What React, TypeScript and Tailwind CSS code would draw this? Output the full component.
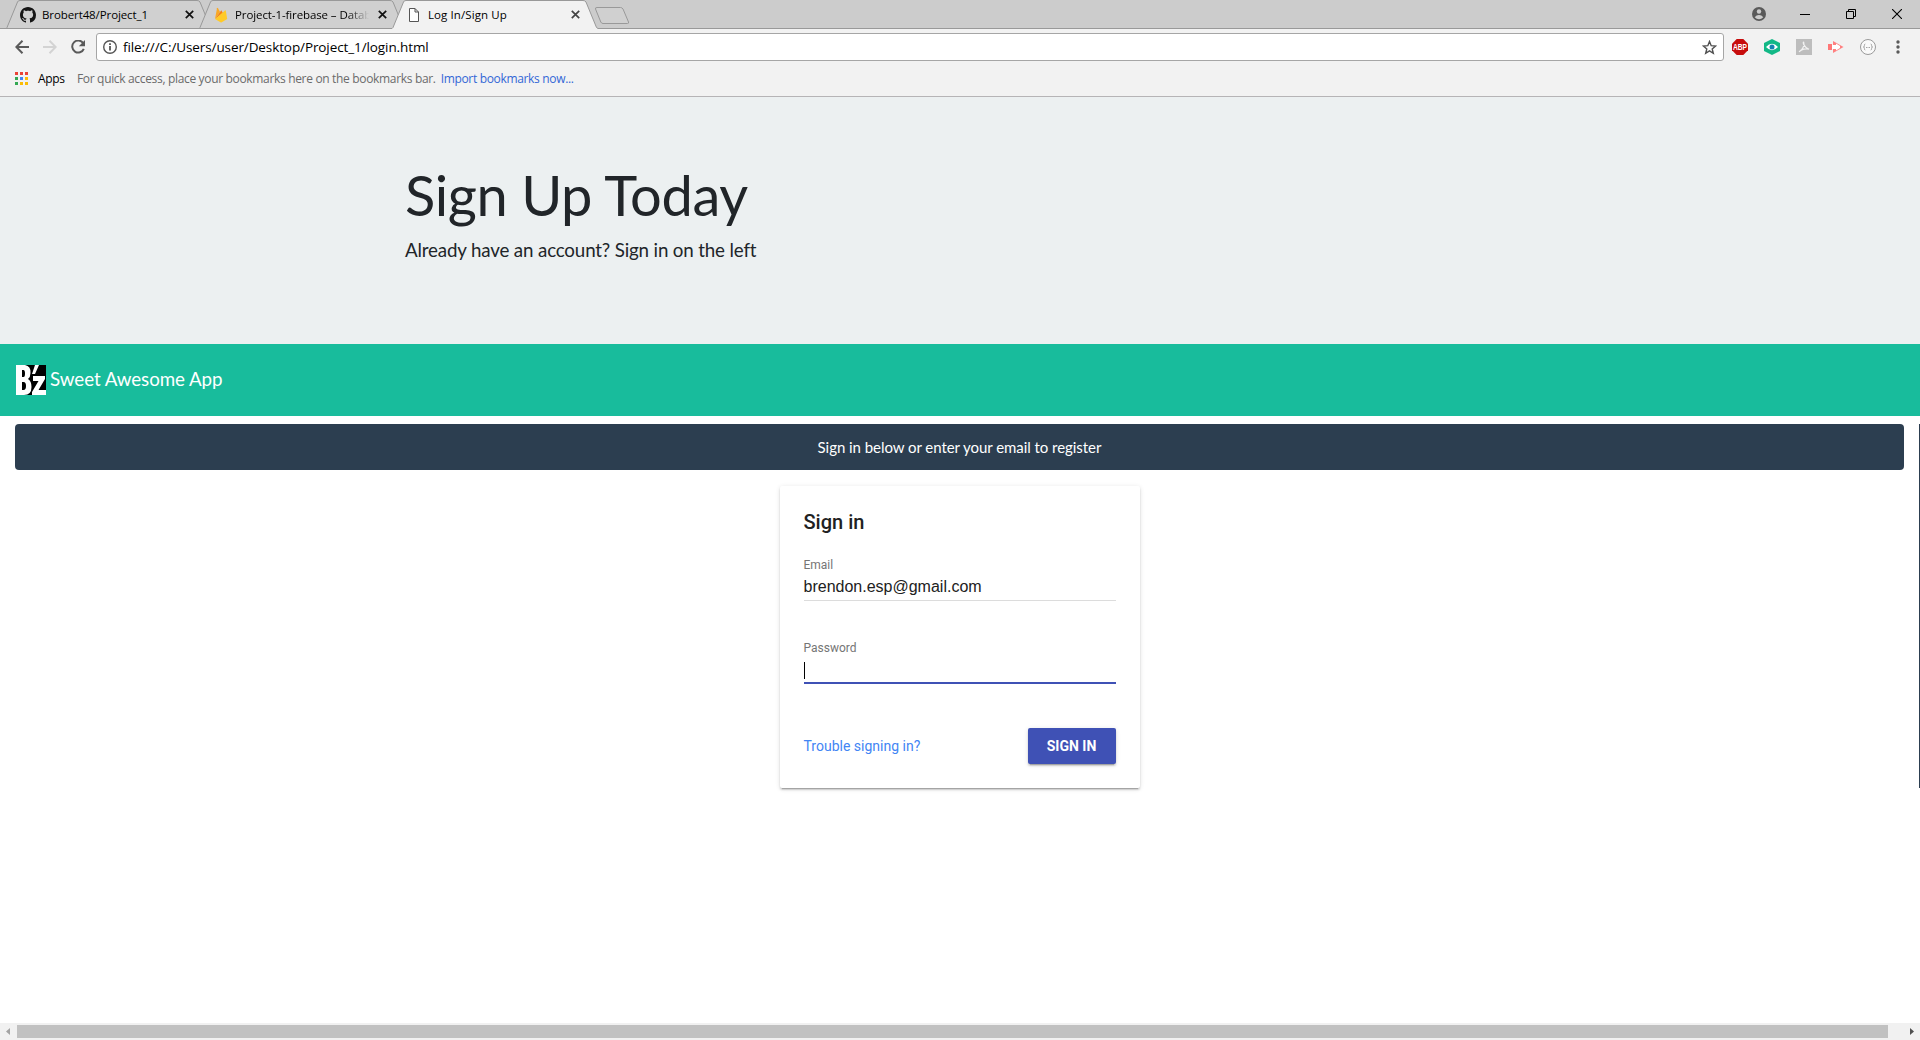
import type { ReactNode } from 'react';

const UI = "font-['Open_Sans',sans-serif]";

function Tab({ icon, title, active = false }: { icon: ReactNode; title: ReactNode; active?: boolean }) {
  return (
    <div className={active ? 'relative z-20 -ml-[13px] flex h-[29px] w-[206px] items-center pl-[14px]' : 'relative -ml-[13px] flex h-[29px] w-[206px] items-center pl-[14px]'}>
      <svg className="absolute inset-0" width="206" height="29" viewBox="0 0 206 29" fill="none">
        <path d="M0 28.5 L1 27.5 L11.5 2 Q12 .5 14 .5 H191 Q193 .5 194 2 L204.500 27.500 L206 28.500 V29 H0Z" fill={active ? '#f2f2f2' : '#d0d0d0'} />
        <path d="M0 28.500 L1 27.500 L11.500 2 Q12 .5 14 .5 H191 Q193 .5 194 2 L204.500 27.500 L206 28.500" stroke="#999" />
        {!active && <path d="M0 28.5H206" stroke="#999" />}
      </svg>
      <div className="relative flex w-4 justify-center">{icon}</div>
      <div className="relative ml-1.5 flex-1">{title}</div>
      <svg className="relative mr-[18px]" width="9" height="9" viewBox="0 0 9 9" stroke={active ? '#444' : '#111'} strokeWidth="1.7">
        <path d="M.8 .8 8.200 8.200M8.200 .8 .8 8.200" />
      </svg>
    </div>
  );
}

function Titlebar() {
  return (
    <div className={`${UI} flex h-[29px] border-b border-[#999] bg-[#cccccc]`}>
      <div className="flex h-[29px] pl-[19px]">
        <Tab
          icon={
            <svg width="16" height="16" viewBox="0 0 16 16" fill="#161616">
              <path d="M8 0C3.580 0 0 3.580 0 8c0 3.540 2.290 6.530 5.470 7.590.4.070.55-.17.55-.38 0-.19-.01-.82-.01-1.490-2.010.37-2.530-.49-2.690-.94-.09-.23-.48-.94-.82-1.130-.28-.15-.68-.52-.01-.53.63-.01 1.080.58 1.230.82.72 1.210 1.870.87 2.330.66.070-.52.28-.87.51-1.070-1.780-.2-3.640-.89-3.640-3.950 0-.87.31-1.590.82-2.150-.08-.2-.36-1.020.08-2.120 0 0 .67-.21 2.200.82.64-.18 1.320-.27 2-.27s1.360.09 2 .27c1.530-1.040 2.200-.82 2.200-.82.44 1.100.16 1.920.08 2.120.51.56.82 1.270.82 2.150 0 3.070-1.870 3.750-3.650 3.950.29.25.54.73.54 1.480 0 1.070-.01 1.930-.01 2.200 0 .21.15.46.55.38A8.010 8.010 0 0 0 16 8c0-4.420-3.580-8-8-8Z" />
            </svg>
          }
          title={<span className="block whitespace-nowrap text-[11.5px] tracking-[-0.1px] text-black">Brobert48/Project_1</span>}
        />
        <Tab
          icon={
            <svg width="14" height="16" viewBox="0 0 14 16">
              <path d="M1 12 3 1.200Q3.300.5 3.900 1.100L6 5Z" fill="#f9a825" />
              <path d="M1 12 7.300 3.200 9 6.200Z" fill="#f57f17" />
              <path d="M1 12 11 3.500Q11.600 3 11.800 3.800L13.200 12 7.800 15.300Q7.100 15.600 6.400 15.300Z" fill="#ffca28" />
            </svg>
          }
          title={
            <span className="block w-[134px] whitespace-nowrap bg-[linear-gradient(to_right,#000_112px,transparent_134px)] bg-clip-text text-[11.5px] tracking-[-0.1px] text-transparent">
              Project-1-firebase – Datab
            </span>
          }
        />
        <Tab
          active
          icon={
            <svg width="10" height="14" viewBox="0 0 10 14" fill="#fff" stroke="#555">
              <path d="M.5.5H6L9.500 4V13.500H.5ZM6 .5V4H9.500" />
            </svg>
          }
          title={<span className="block whitespace-nowrap text-[11.5px] tracking-[0.1px] text-black">Log In/Sign Up</span>}
        />
        <svg className="-ml-[4px] mt-[7px]" width="36" height="18" viewBox="0 0 36 18" fill="#d0d0d0" stroke="#999">
          <path d="M3 .5H26.500Q28 .5 29 2L34.500 15Q35 16.500 33.500 16.500H9Q7.500 16.500 6.800 15L1.500 2Q1 .5 3 .5Z" />
        </svg>
      </div>
      <div className="ml-auto flex h-[27px] items-center">
        <svg className="mr-[34px]" width="14" height="14" viewBox="0 0 14 14">
          <circle cx="7" cy="7" r="7" fill="#5a5a5a" />
          <circle cx="7" cy="4.500" r="2.200" fill="#ccc" />
          <path d="M2.700 10.200Q4.500 7.800 7 7.900 9.500 7.800 11.300 10.200 9.500 12.300 7 12.300 4.500 12.300 2.700 10.200" fill="#ccc" />
        </svg>
        <svg className="mr-9" width="10" height="10" stroke="#000" fill="none"><path d="M0 5.500H10" /></svg>
        <svg className="mr-9" width="10" height="10" stroke="#000" fill="none"><path d="M.5 2.500H7.500V9.500H.5ZM2.500 2.500V.5H9.500V7.500H7.500" /></svg>
        <svg className="mr-[18px]" width="10" height="10" stroke="#000" strokeWidth="1.100"><path d="M0 0 10 10M10 0 0 10" /></svg>
      </div>
    </div>
  );
}

function Toolbar() {
  return (
    <div className={`${UI} flex h-[36px] items-center bg-[#f2f2f2] pt-1 pb-1`}>
      <svg className="ml-[15px]" width="14" height="14" fill="none" stroke="#5a5a5a" strokeWidth="2"><path d="M14 7H1.500M7.500 .8 1.300 7 7.500 13.200" /></svg>
      <svg className="ml-[14px]" width="14" height="14" fill="none" stroke="#d3d3d3" strokeWidth="2"><path d="M0 7H12.500M6.500 .8 12.700 7 6.500 13.200" /></svg>
      <svg className="ml-[14px]" width="15" height="14" fill="none" stroke="#5a5a5a" strokeWidth="2">
        <path d="M12.200 3.200A6 6 0 1 0 12.800 8.800" />
        <path d="M14 0V6.300H7.800Z" fill="#5a5a5a" stroke="none" />
      </svg>
      <div className="ml-[10px] flex h-7 w-[1628px] items-center rounded-[3px] border border-[#a6a6a6] bg-white">
        <svg className="ml-1.5" width="14" height="14" fill="none" stroke="#555">
          <circle cx="7" cy="7" r="6.300" strokeWidth="1.400" />
          <path d="M7 6V10.600M7 3.300V5" strokeWidth="1.800" />
        </svg>
        <span className="ml-[6px] whitespace-nowrap text-[13.5px] tracking-[-0.1px] text-black">file:///C:/Users/user/Desktop/Project_1/login.html</span>
        <svg className="ml-auto mr-[6px]" width="15" height="15" viewBox="0 0 15 15" fill="none" stroke="#505050" strokeWidth="1.400">
          <path d="M7.500 1.500 9.200 5.700 13.600 6 10.200 8.900 11.300 13.300 7.500 10.900 3.700 13.300 4.800 8.900 1.400 6 5.800 5.700Z" />
        </svg>
      </div>
      <div className="ml-2 flex items-center gap-4">
        <svg width="16" height="16" viewBox="0 0 16 16">
          <path d="M4.700 0H11.300L16 4.700V11.300L11.300 16H4.700L0 11.300V4.700Z" fill="#c70d0d" />
          <text x="8" y="11" textAnchor="middle" textLength="14" lengthAdjust="spacingAndGlyphs" fontSize="8.500" fontWeight="700" fill="#fff" fontFamily="Liberation Sans">ABP</text>
        </svg>
        <svg width="16" height="16" viewBox="0 0 16 16">
          <path d="M8 0 16 4V12L8 16 0 12V4Z" fill="#12b886" />
          <path d="M2 8Q8 1.500 14 8 8 14.500 2 8" fill="#fff" />
          <circle cx="8" cy="8" r="2.500" fill="#1582b0" />
        </svg>
        <svg width="16" height="16" viewBox="0 0 16 16" fill="none">
          <path d="M0 0H16V16H0Z" fill="#bdbdbd" />
          <path d="M3 12.800C6 11.500 9 6.500 7.700 3.300 6.800 2.500 7 7.800 13 10.200 10 9.300 5.500 10.200 3 12.800" stroke="#f1f1f1" strokeWidth="1.200" />
        </svg>
        <svg width="16" height="14" viewBox="0 0 16 14">
          <path d="M5 1 15.500 7 5 13Z" fill="#ff8080" />
          <path d="M4 5H8V3.500L12 6V8L8 10.500V9H4Z" fill="#fff" />
          <path d="M0 4H4V10H0Z" fill="#ff7777" />
        </svg>
        <svg width="16" height="16" viewBox="0 0 16 16" fill="none" stroke="#9a9a9a">
          <circle cx="8" cy="8" r="7.500" fill="#fafafa" />
          <path d="M5.300 5Q4.300 5 4.400 6.500T3.400 8Q4.500 8 4.400 9.500T5.300 11M10.700 5Q11.700 5 11.600 6.500T12.600 8Q11.500 8 11.600 9.500T10.700 11M6 8.500H7M7.500 8.500H8.500M9 8.500H10" strokeWidth=".9" />
        </svg>
        <svg className="ml-[4px]" width="4" height="14" fill="#5a5a5a"><circle cx="2" cy="2" r="1.700" /><circle cx="2" cy="7" r="1.700" /><circle cx="2" cy="12" r="1.700" /></svg>
      </div>
    </div>
  );
}

const appColors = ['#ea4335', '#ea4335', '#ea4335', '#34a853', '#4285f4', '#fbbc05', '#34a853', '#fbbc05', '#fbbc05'];

function Bookmarks() {
  return (
    <div className={`${UI} flex h-8 items-center border-b border-[#b6b4b6] bg-[#f2f2f2] pb-1 text-[12px] whitespace-nowrap`}>
      <div className="ml-[15px] grid grid-cols-3 gap-[2px]">
        {appColors.map((c, i) => (
          <span key={i} className="size-[3px]" style={{ backgroundColor: c }} />
        ))}
      </div>
      <span className="ml-[10px] w-[27px] tracking-[-0.35px] text-black">Apps</span>
      <span className="ml-[12px] tracking-[-0.33px] text-[#6b6b6b]">For quick access, place your bookmarks here on the bookmarks bar.</span>
      <span className="ml-[5px] tracking-[-0.33px] text-[#3367d6]">Import bookmarks now...</span>
    </div>
  );
}

function Brand() {
  return (
    <div className="flex h-[72px] items-center bg-[#18bc9c] pl-4 font-['Lato',sans-serif]">
      <svg width="30" height="30" viewBox="0 0 30 30">
        <path d="M0 0H30V30H0Z" fill="#000" />
        <path fillRule="evenodd" d="M0 0H9Q15 1 14.500 8 14.500 12 12 14 15.500 16 15.500 22 15.500 30 8 30H0ZM6 5V12H7.500Q9 12 9 8.500T7.500 5ZM6 17V25H7.500Q10 25 10 21T7.500 17Z" fill="#fff" />
        <path d="M19 0H23L19 9H16ZM17 11H29V14L22.500 25H30V30H16V27L22.500 16H17Z" fill="#fff" />
      </svg>
      <span className="ml-1 pb-0.5 text-[18.750px] tracking-[-0.07px] text-white">Sweet Awesome App</span>
    </div>
  );
}

function SignInCard() {
  return (
    <div className="mx-auto mt-4 h-[302px] w-[360px] rounded-[2px] bg-white px-6 font-['Roboto',sans-serif] shadow-[0_2px_2px_0_rgba(0,0,0,.14),0_3px_1px_-2px_rgba(0,0,0,.2),0_1px_5px_0_rgba(0,0,0,.12)]">
      <h2 className="pt-6 text-[20px] leading-6 font-medium text-[#212121]">Sign in</h2>
      <div className="mt-[21px] border-b border-[#dcdcdc] pb-px">
        <div className="text-[12px] leading-5 text-[#757575]">Email</div>
        <div className="font-['Liberation_Sans',sans-serif] text-[16px] leading-6 text-[#212121]">brendon.esp@gmail.com</div>
      </div>
      <div className="mt-[37px] h-[46px] border-b-2 border-[#3f51b5]">
        <div className="text-[12px] leading-5 text-[#757575]">Password</div>
        <div className="mt-1 h-[17px] w-px bg-black" />
      </div>
      <div className="mt-[44px] flex h-9 items-center justify-between">
        <a className="text-[14px] text-[#4285f4]">Trouble signing in?</a>
        <button className="h-9 w-[88px] rounded-[2px] bg-[#3f51b5] text-[14px] font-bold text-white shadow-[0_2px_2px_0_rgba(0,0,0,.14),0_3px_1px_-2px_rgba(0,0,0,.2),0_1px_5px_0_rgba(0,0,0,.12)]">SIGN IN</button>
      </div>
    </div>
  );
}

export default function App() {
  return (
    <div className="flex h-[1040px] w-[1920px] flex-col overflow-hidden bg-white">
      <Titlebar />
      <Toolbar />
      <Bookmarks />
      <header className="h-[247px] bg-[#ecf0f1] pt-[64px] pl-[405px] font-['Lato',sans-serif] text-[#212529]">
        <h1 className="text-[56px] leading-[67px] tracking-[-0.42px]">Sign Up Today</h1>
        <p className="mt-2 text-[18.750px] leading-7 tracking-[-0.16px]">Already have an account? Sign in on the left</p>
      </header>
      <Brand />
      <main className="mt-2 flex justify-between">
        <div className="ml-[15px] w-[1889px]">
          <div className="flex h-[46px] items-center justify-center rounded-[4px] bg-[#2c3e50] font-['Lato',sans-serif] text-[15px] tracking-[-0.05px] text-white">
            Sign in below or enter your email to register
          </div>
          <SignInCard />
        </div>
        <div className="h-[364px] w-px bg-[#2c3e50]" />
      </main>
      <div className="mt-auto flex h-[17px] items-center bg-[#f1f1f1]">
        <svg className="ml-[6px]" width="4" height="7" fill="#a3a3a3"><path d="M4 0V7L0 3.500Z" /></svg>
        <div className="ml-[7px] h-[13px] w-[1871px] bg-[#c1c1c1]" />
        <svg className="ml-[22px]" width="4" height="7" fill="#505050"><path d="M0 0V7L4 3.500Z" /></svg>
      </div>
    </div>
  );
}
